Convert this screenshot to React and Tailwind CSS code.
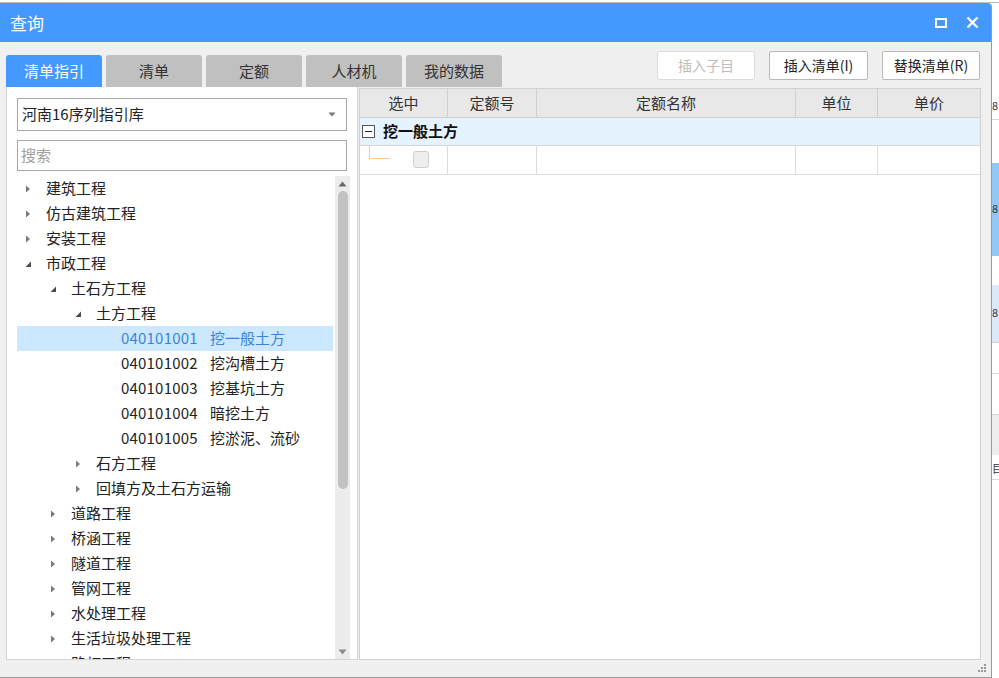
import React from "react";

const tree = [
  { l: 0, t: "建筑工程", a: "c" },
  { l: 0, t: "仿古建筑工程", a: "c" },
  { l: 0, t: "安装工程", a: "c" },
  { l: 0, t: "市政工程", a: "e" },
  { l: 1, t: "土石方工程", a: "e" },
  { l: 2, t: "土方工程", a: "e" },
  { l: 3, c: "040101001", t: "挖一般土方", sel: true },
  { l: 3, c: "040101002", t: "挖沟槽土方" },
  { l: 3, c: "040101003", t: "挖基坑土方" },
  { l: 3, c: "040101004", t: "暗挖土方" },
  { l: 3, c: "040101005", t: "挖淤泥、流砂" },
  { l: 2, t: "石方工程", a: "c" },
  { l: 2, t: "回填方及土石方运输", a: "c" },
  { l: 1, t: "道路工程", a: "c" },
  { l: 1, t: "桥涵工程", a: "c" },
  { l: 1, t: "隧道工程", a: "c" },
  { l: 1, t: "管网工程", a: "c" },
  { l: 1, t: "水处理工程", a: "c" },
  { l: 1, t: "生活垃圾处理工程", a: "c" },
  { l: 1, t: "路灯工程", a: "c" },
];

const indent = ["pl-[5px]", "pl-[30px]", "pl-[55px]", "pl-[80px]"];

function Arrow({ type }) {
  if (type === "c")
    return (
      <svg width="12" height="12" viewBox="0 0 12 12">
        <path d="M4 2.5 L8 6 L4 9.5 Z" fill="#7a7a7a" />
      </svg>
    );
  if (type === "e")
    return (
      <svg width="12" height="12" viewBox="0 0 12 12">
        <path d="M9 3.5 L9 9 L3.5 9 Z" fill="#4a4a4a" />
      </svg>
    );
  return <span className="w-[12px]" />;
}

const tabs = ["清单指引", "清单", "定额", "人材机", "我的数据"];
const cols = [
  { t: "选中", w: "w-[88px]" },
  { t: "定额号", w: "w-[89px]" },
  { t: "定额名称", w: "w-[259px]" },
  { t: "单位", w: "w-[82px]" },
  { t: "单价", w: "flex-1" },
];

export default function App() {
  return (
    <div className="w-[999px] h-[678px] bg-white flex flex-col overflow-hidden font-['Noto_Sans_CJK_SC','Noto_Sans',sans-serif] text-[#222]">
      <div className="h-[3px] border-b border-[#bdbdbd] bg-white" />
      <div className="flex flex-1">
        {/* dialog */}
        <div className="w-[992px] shrink-0 h-[675px] flex flex-col border-r border-b border-[#9a9a9a] rounded-tr-[4px] overflow-hidden">
          <div className="h-[39px] bg-[#4499ff] flex items-center pl-[10px] pr-[12px]">
            <span className="text-white text-[17px] leading-none">查询</span>
            <div className="ml-auto flex items-center gap-[19px]">
              <span className="w-[12px] h-[10px] border-2 border-white" />
              <svg width="13" height="13" viewBox="0 0 13 13">
                <path d="M1.5 1.5 L11.5 11.5 M11.5 1.5 L1.5 11.5" stroke="white" strokeWidth="2.4" />
              </svg>
            </div>
          </div>
          <div className="flex-1 bg-[#f0f0f0] flex flex-col">
            <div className="h-[45px] flex pl-[6px] pr-[11px]">
              <div className="flex items-end gap-[4px]">
                {tabs.map((t, i) => (
                  <div
                    key={t}
                    className={
                      "w-[96px] h-[32px] rounded-t-[3px] flex items-center justify-center text-[15px] " +
                      (i === 0 ? "bg-[#4499ff] text-white" : "bg-[#c0c0c0] text-[#333]")
                    }
                  >
                    {t}
                  </div>
                ))}
              </div>
              <div className="ml-auto flex gap-[14px] mt-[9px]">
                <button className="w-[98px] h-[29px] bg-white border border-[#dcdcdc] rounded-[2px] text-[14px] text-[#bdbdbd]">
                  插入子目
                </button>
                <button className="w-[99px] h-[29px] bg-white border border-[#b8b8b8] rounded-[2px] text-[14px] text-[#222]">
                  插入清单(I)
                </button>
                <button className="w-[98px] h-[29px] bg-white border border-[#b8b8b8] rounded-[2px] text-[14px] text-[#222]">
                  替换清单(R)
                </button>
              </div>
            </div>
            <div className="h-[573px] flex pl-[6px]">
              {/* left panel */}
              <div className="w-[352px] bg-white border-x border-b border-[#d4d4d4] flex flex-col">
                <div className="px-[10px] pt-[11px]">
                  <div className="h-[33px] border border-[#a8a8a8] flex items-center pl-[4px] pr-[10px] text-[15px]">
                    <span>河南16序列指引库</span>
                    <svg className="ml-auto" width="8" height="5" viewBox="0 0 8 5">
                      <path d="M0.5 0.5 L7.5 0.5 L4 4.5 Z" fill="#777" />
                    </svg>
                  </div>
                  <div className="mt-[9px] h-[31px] border border-[#a8a8a8] flex items-center pl-[3px] text-[15px] text-[#a0a0a0]">
                    搜索
                  </div>
                </div>
                <div className="flex-1 flex pl-[10px] pt-[5px] min-h-0">
                  <div className="flex-1 overflow-hidden">
                    {tree.map((n, i) => (
                      <div
                        key={i}
                        className={
                          "h-[25px] flex items-center text-[15px] whitespace-nowrap " +
                          indent[n.l] +
                          (n.sel ? " bg-[#cce8ff] text-[#3a84d8]" : "")
                        }
                      >
                        <Arrow type={n.a} />
                        {n.c && <span className="ml-[12px] w-[77px] tracking-[0.2px]">{n.c}</span>}
                        <span className="ml-[12px]">{n.t}</span>
                      </div>
                    ))}
                  </div>
                  <div className="w-[15px] ml-[2px] mr-[7px] bg-[#ececec] flex flex-col items-center">
                    <svg className="mt-[5px]" width="9" height="6" viewBox="0 0 9 6">
                      <path d="M0.5 5.5 L8.5 5.5 L4.5 0.5 Z" fill="#6a6a6a" />
                    </svg>
                    <div className="mt-[4px] w-[10px] h-[298px] rounded-full bg-[#c2c2c2]" />
                    <svg className="mt-auto mb-[4px]" width="9" height="6" viewBox="0 0 9 6">
                      <path d="M0.5 0.5 L8.5 0.5 L4.5 5.5 Z" fill="#8a8a8a" />
                    </svg>
                  </div>
                </div>
              </div>
              {/* right panel */}
              <div className="w-[622px] ml-[1px] mt-[1px] bg-white border border-[#d0d0d0] flex flex-col">
                <div className="h-[29px] flex bg-[#e8e8e8] border-b border-[#d0d0d0] text-[15px] text-[#333]">
                  {cols.map((c, i) => (
                    <div
                      key={c.t}
                      className={c.w + " flex items-center justify-center" + (i < 4 ? " border-r border-[#d0d0d0]" : "")}
                    >
                      {c.t}
                    </div>
                  ))}
                </div>
                <div className="h-[28px] flex items-center bg-[#e5f3ff] border-b border-[#d6d6d6] pl-[2px]">
                  <span className="w-[13px] h-[13px] border border-[#555] bg-white flex items-center justify-center">
                    <span className="w-[7px] h-[1px] bg-[#222]" />
                  </span>
                  <span className="ml-[8px] text-[15px] font-bold text-[#111]">挖一般土方</span>
                </div>
                <div className="h-[29px] flex border-b border-[#dcdcdc]">
                  {cols.map((c, i) => (
                    <div
                      key={c.t}
                      className={c.w + " relative" + (i < 4 ? " border-r border-[#dcdcdc]" : "")}
                    >
                      {i === 0 && (
                        <>
                          <span className="absolute left-[9px] top-0 w-[1px] h-[12px] bg-[#ffc98a]" />
                          <span className="absolute left-[9px] top-[12px] w-[21px] h-[1px] bg-[#ffc98a]" />
                          <span className="absolute left-[53px] top-[5px] w-[16px] h-[17px] rounded-[3px] border border-[#cfcfcf] bg-[#eeeeee]" />
                        </>
                      )}
                    </div>
                  ))}
                </div>
              </div>
            </div>
            <div className="flex-1 flex justify-end items-end pr-[4px] pb-[4px]">
              <svg width="10" height="10" viewBox="0 0 10 10" fill="#9a9a9a">
                <rect x="7" y="1" width="2" height="2" />
                <rect x="4" y="4" width="2" height="2" />
                <rect x="7" y="4" width="2" height="2" />
                <rect x="1" y="7" width="2" height="2" />
                <rect x="4" y="7" width="2" height="2" />
                <rect x="7" y="7" width="2" height="2" />
              </svg>
            </div>
          </div>
        </div>
        {/* background app strip */}
        <div className="flex-1 min-w-0 overflow-hidden flex flex-col bg-white text-[11px] leading-none text-[#333]">
          <div className="h-[77px]" />
          <div className="h-[40px] border-b border-[#d8d8d8] pt-[20px]">8</div>
          <div className="h-[43px]" />
          <div className="h-[93px] bg-[#90c8f8] pt-[40px]">8</div>
          <div className="h-[29px]" />
          <div className="h-[58px] bg-[#dbe9fb] border-b border-[#cfcfcf] pt-[22px]">8</div>
          <div className="h-[30px]" />
          <div className="h-[42px] border-y border-[#d8d8d8]" />
          <div className="h-[40px] bg-[#eeeeee]" />
          <div className="h-[25px] border-b border-[#d8d8d8] pt-[8px]">目</div>
          <div className="flex-1" />
        </div>
      </div>
    </div>
  );
}
